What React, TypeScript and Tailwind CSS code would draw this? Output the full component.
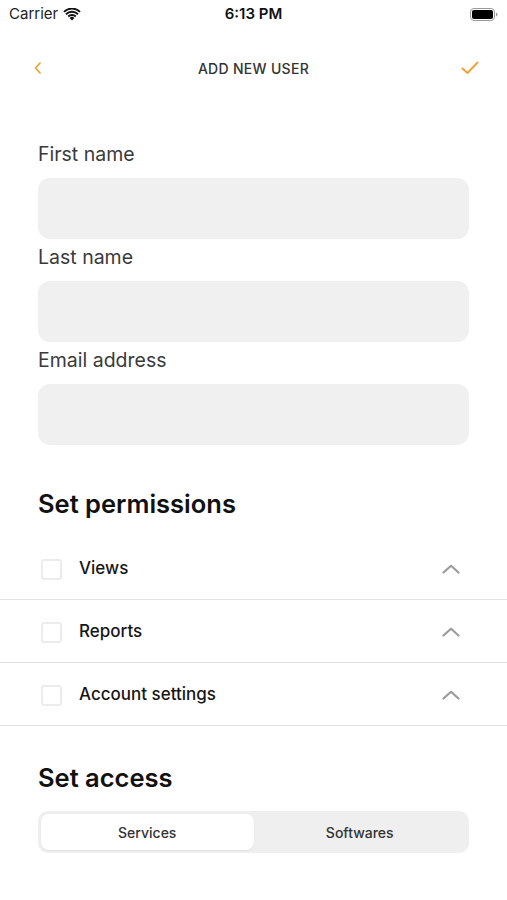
import React from "react";

const font = { fontFamily: "Inter, 'Noto Sans', sans-serif" };

function Wifi() {
  return (
    <svg width="18" height="13" viewBox="0 0 18 13">
      <path d="M9 12.5 L6.6 9.9 A3.4 3.4 0 0 1 11.4 9.9 Z" fill="#111" />
      <path d="M4.6 7.8 A6.3 6.3 0 0 1 13.4 7.8 L12.1 9.2 A4.4 4.4 0 0 0 5.9 9.2 Z" fill="#111" />
      <path d="M2.4 5.5 A9.4 9.4 0 0 1 15.6 5.5 L14.3 6.9 A7.5 7.5 0 0 0 3.7 6.9 Z" fill="#111" />
      <path d="M0.3 3.2 A12.4 12.4 0 0 1 17.7 3.2 L16.4 4.6 A10.5 10.5 0 0 0 1.6 4.6 Z" fill="#111" />
    </svg>
  );
}

function Battery() {
  return (
    <svg width="28" height="13" viewBox="0 0 28 13">
      <rect x="0.5" y="0.5" width="24" height="12" rx="3.5" fill="none" stroke="#9a9a9a" strokeWidth="1" />
      <rect x="2" y="2" width="21" height="9" rx="2" fill="#000" />
      <path d="M26 4.5 Q27.5 5 27.5 6.5 Q27.5 8 26 8.5 Z" fill="#9a9a9a" />
    </svg>
  );
}

function ChevronUp() {
  return (
    <svg width="18" height="10" viewBox="0 0 18 10">
      <path d="M1.5 8.5 L9 1.8 L16.5 8.5" fill="none" stroke="#9b9b9b" strokeWidth="2.2" strokeLinecap="round" strokeLinejoin="round" />
    </svg>
  );
}

function Field({ label }: { label: string }) {
  return (
    <div className="flex flex-col">
      <div className="text-[19.5px] leading-[24px] text-[#3a3a3a]">{label}</div>
      <div className="mt-[12px] h-[61px] rounded-[12px] bg-[#f0f0f0]" />
    </div>
  );
}

function PermRow({ label }: { label: string }) {
  return (
    <div className="flex h-[63px] items-center border-b border-[#e3e3e3] pl-[41px] pr-[47px] pt-[2px]">
      <div className="h-[21px] w-[21px] rounded-[3px] border-2 border-[#ececec] bg-white" />
      <div className="ml-[17px] flex-1 text-[17px] font-medium text-[#161616]">{label}</div>
      <ChevronUp />
    </div>
  );
}

export default function App() {
  return (
    <div className="min-h-[900px] w-[507px] bg-white" style={font}>
      {/* Status bar */}
      <div className="relative flex h-[28px] items-center px-[9px]">
        <div className="flex items-center gap-[5px]">
          <span className="text-[15px] text-[#222]">Carrier</span>
          <Wifi />
        </div>
        <div className="absolute left-0 right-0 text-center text-[15px] font-semibold text-[#111]">6:13 PM</div>
        <div className="ml-auto">
          <Battery />
        </div>
      </div>

      {/* Nav bar */}
      <div className="relative flex h-[80px] items-center justify-between pl-[32px] pr-[27px]">
        <svg width="12" height="14" viewBox="0 0 12 14">
          <path d="M8 2 L3.5 7 L8 12" fill="none" stroke="#f0a33a" strokeWidth="1.8" strokeLinecap="round" strokeLinejoin="round" />
        </svg>
        <div className="absolute left-0 right-0 text-center text-[14px] font-medium tracking-[0.3px] text-[#333]">ADD NEW USER</div>
        <svg width="20" height="16" viewBox="0 0 20 16">
          <path d="M2.5 8.5 L7.5 13 L17.5 2.5" fill="none" stroke="#f0a33a" strokeWidth="2" strokeLinecap="round" strokeLinejoin="round" />
        </svg>
      </div>

      {/* Form */}
      <div className="mt-[34px] flex flex-col gap-[6px] px-[38px]">
        <Field label="First name" />
        <Field label="Last name" />
        <Field label="Email address" />
      </div>

      <div className="mt-[44px] px-[38px] text-[25.5px] font-semibold leading-[30px] text-[#111]">Set permissions</div>

      <div className="mt-[18px] flex flex-col">
        <PermRow label="Views" />
        <PermRow label="Reports" />
        <PermRow label="Account settings" />
      </div>

      <div className="mt-[37px] px-[38px] text-[25.5px] font-semibold leading-[30px] text-[#111]">Set access</div>

      <div className="mx-[38px] mt-[18px] flex h-[42px] rounded-[10px] bg-[#efefef] p-[3px]">
        <div className="flex flex-1 items-center justify-center rounded-[8px] bg-white text-[14px] font-medium text-[#333] shadow-[0_1px_2px_rgba(0,0,0,0.06)]">
          Services
        </div>
        <div className="flex flex-1 items-center justify-center text-[14px] font-medium text-[#333]">Softwares</div>
      </div>
    </div>
  );
}
